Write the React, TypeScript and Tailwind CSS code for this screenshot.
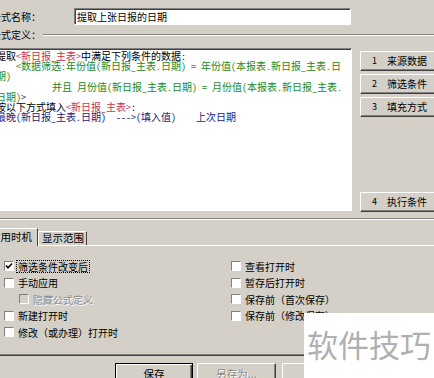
import React from 'react'

// classic win32 bevels
const sunken =
  'border border-t-[#808080] border-l-[#808080] border-b-white border-r-white shadow-[inset_1px_1px_0_#404040]'
const raised =
  'border border-t-white border-l-white border-b-[#404040] border-r-[#404040] shadow-[inset_-1px_-1px_0_#808080]'

const red = 'text-[#c8304f]'
const green = 'text-[#1b881b]'
const navy = 'text-[#20207e]'
const disabledText = 'text-[#8a8a8a] [text-shadow:1px_1px_0_#fff]'

function Box({ checked, disabled }: { checked?: boolean; disabled?: boolean }) {
  return (
    <span
      className={`relative block w-[10px] h-[10px] shrink-0 border border-t-[#808080] border-l-[#808080] border-b-white border-r-white ${
        disabled ? 'bg-[#d4d0c8]' : 'bg-white'
      }`}
    >
      {checked && (
        <svg viewBox="0 0 8 8" className="absolute inset-0 w-[8px] h-[8px]">
          <polyline points="1,3.5 3,5.8 7,1.5" fill="none" stroke="#000" strokeWidth="1.6" />
        </svg>
      )}
    </span>
  )
}

function Check({
  label,
  checked,
  disabled,
  focused,
  indent,
}: {
  label: string
  checked?: boolean
  disabled?: boolean
  focused?: boolean
  indent?: boolean
}) {
  return (
    <div className={`h-[16.5px] flex items-center gap-[2px] ${indent ? 'pl-[15px]' : ''}`}>
      <Box checked={checked} disabled={disabled} />
      <span
        className={`px-[1px] leading-[11px] border border-dotted ${focused ? 'border-black' : 'border-transparent'} ${
          disabled ? disabledText : ''
        }`}
      >
        {label}
      </span>
    </div>
  )
}

function SideButton({ n, label, className = '' }: { n: string; label: string; className?: string }) {
  return (
    <div className={`h-[20px] flex items-center pl-[11px] ${raised} ${className}`}>
      <span className="w-[15px] text-[9px]">{n}</span>
      <span>{label}</span>
    </div>
  )
}

export default function App() {
  return (
    <div className="relative w-[434px] h-[378px] overflow-hidden bg-[#d4d0c8] text-black font-['Noto_Sans_CJK_SC',sans-serif] text-[10px] leading-[12px]">
      <div className="-ml-[10px] w-[480px] pt-[8px]">
        {/* name */}
        <div className="flex items-center h-[17px]">
          <span className="w-[84px] pl-[1px]">公式名称：</span>
          <div className={`w-[277px] h-[17px] bg-white flex items-center pl-[2px] ${sunken}`}>提取上张日报的日期</div>
        </div>

        {/* definition header */}
        <div className="mt-[3px] h-[14px] flex items-center">
          <span className="w-[52px] pl-[1px]">公式定义：</span>
          <div className="flex-1 ml-[1px] h-0 border-t border-t-[#808080] border-b border-b-white" />
        </div>

        <div className="mt-[6px] flex">
          <div
            className={`ml-[2px] w-[360px] h-[163px] bg-white overflow-hidden whitespace-pre pt-[2px] pl-[3px] leading-[10.2px] font-['Noto_Sans_Mono_CJK_SC','Liberation_Mono','Noto_Sans_CJK_SC',monospace] ${sunken}`}
          >
            <div>
              提取<span className={red}>&lt;新日报_主表&gt;</span>中满足下列条件的数据:
            </div>
            <div className={`pl-[20px] ${green}`}>&lt;数据筛选:年份值(新日报_主表.日期) = 年份值(本报表.新日报_主表.日</div>
            <div className={green}>期)</div>
            <div className={`pl-[56px] ${green}`}>并且 月份值(新日报_主表.日期) = 月份值(本报表.新日报_主表.</div>
            <div>
              <span className={green}>日期)</span>
              <span className={navy}>&gt;</span>
            </div>
            <div>
              按以下方式填入<span className={red}>&lt;新日报_主表&gt;</span>:
            </div>
            <div className={navy}>最晚(新日报_主表.日期)  ---&gt;(填入值)    上次日期</div>
          </div>

          <div className="ml-[8px] w-[80px] h-[164px] flex flex-col gap-[3px] pt-[3px]">
            <SideButton n="1" label="来源数据" />
            <SideButton n="2" label="筛选条件" />
            <SideButton n="3" label="填充方式" />
            <SideButton n="4" label="执行条件" className="mt-auto" />
          </div>
        </div>

        <div className="mt-[6px] h-0 border-t border-t-[#808080] border-b border-b-white" />

        {/* tabs */}
        <div className="mt-[8px] -ml-[4px] h-[17px] flex items-start text-[10.5px]">
          <div className="relative z-10 h-[18px] w-[52px] pl-[3px] pt-[2px] bg-[#d4d0c8] border-l border-t border-l-white border-t-white border-r border-r-[#404040] rounded-tl-[2px]">
            应用时机
          </div>
          <div className="mt-[3px] h-[14px] w-[49px] pl-[3px] border-l border-t border-l-white border-t-white border-r border-r-[#404040]">
            显示范围
          </div>
        </div>

        {/* tab panel */}
        <div className="h-[111px] pt-[12px] border-t border-t-white border-b border-b-[#404040] shadow-[inset_0_-1px_0_#808080]">
          <div className="grid grid-cols-[227px_1fr] pl-[14px]">
            <div>
              <Check label="筛选条件改变后" checked focused />
              <Check label="手动应用" />
              <Check label="隐藏公式定义" disabled indent />
              <Check label="新建打开时" />
              <Check label="修改（或办理）打开时" />
            </div>
            <div>
              <Check label="查看打开时" />
              <Check label="暂存后打开时" />
              <Check label="保存前（首次保存）" />
              <Check label="保存前（修改保存）" />
            </div>
          </div>
        </div>

        {/* bottom buttons */}
        <div className="mt-[7px] flex text-[10.5px]">
          <div className="ml-[125px] w-[78px] h-[22px] flex items-center justify-center border border-black shadow-[inset_1px_1px_0_#fff,inset_-1px_-1px_0_#404040,inset_-2px_-2px_0_#808080]">
            保存
          </div>
          <div className={`ml-[4px] w-[79px] h-[22px] flex items-center justify-center ${raised}`}>
            <span className={disabledText}>另存为...</span>
          </div>
          <div className={`ml-[6px] w-[79px] h-[22px] ${raised}`} />
        </div>
      </div>

      {/* watermark */}
      <div className="absolute left-[304px] top-[313px] w-[130px] h-[65px] bg-white pl-[3px] pt-[15px] text-[31px] leading-[31px] text-[#b0b0b0] whitespace-nowrap font-['Noto_Sans_CJK_SC',sans-serif]">
        软件技巧
      </div>
    </div>
  )
}
